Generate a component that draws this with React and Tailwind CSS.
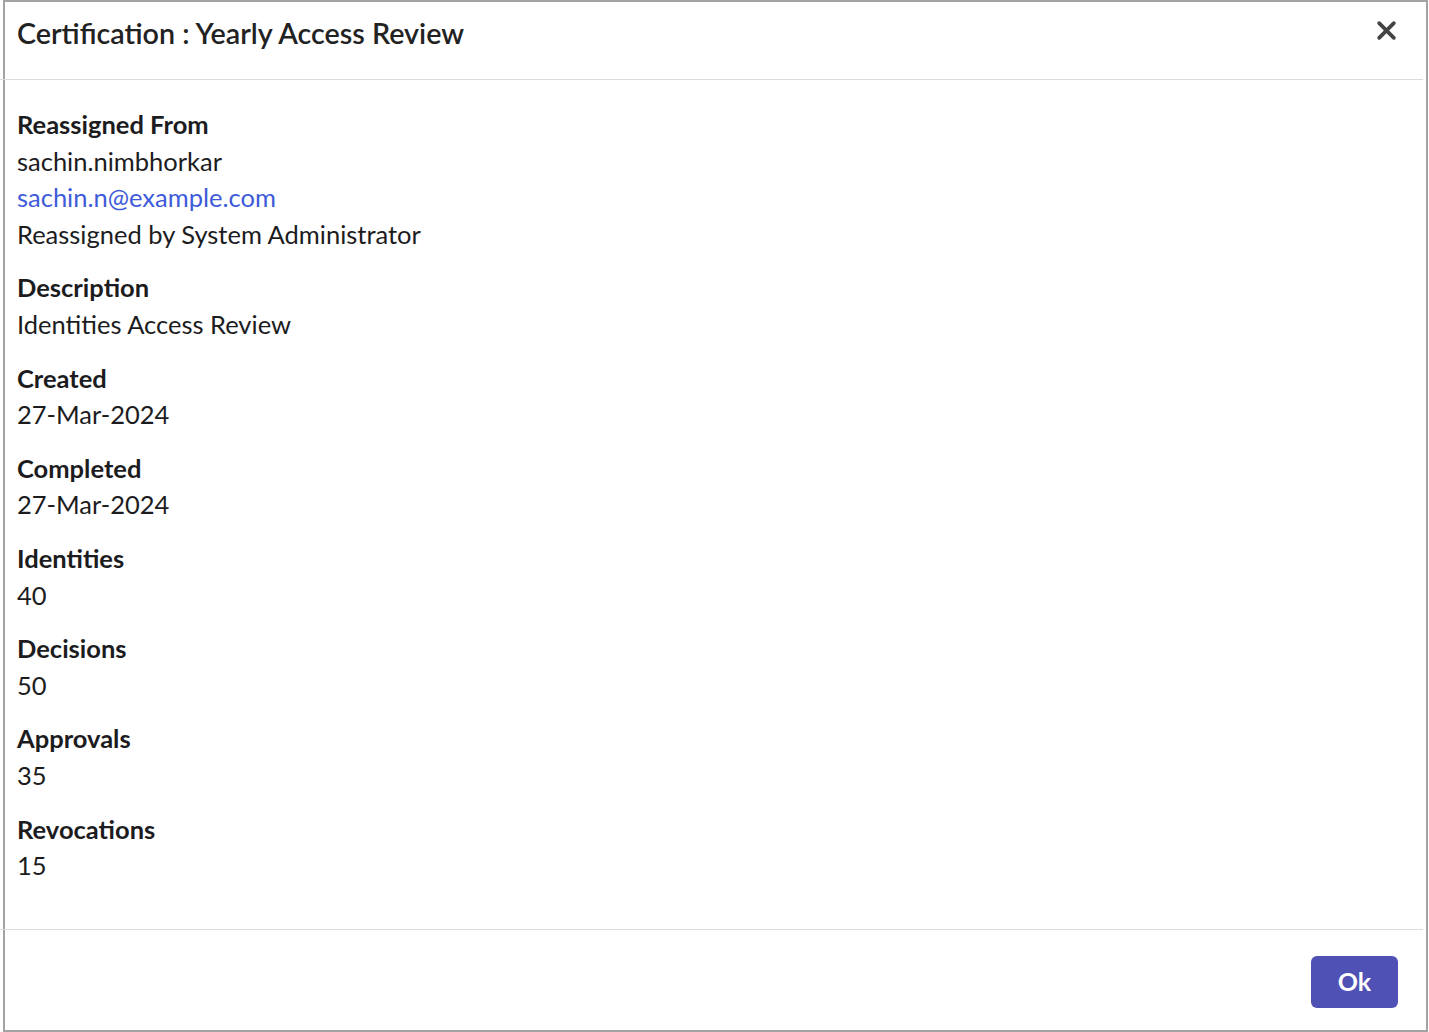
import React from "react";

const sections = [
  { label: "Reassigned From", values: [
    { t: "sachin.nimbhorkar" },
    { t: "sachin.n@example.com", link: true },
    { t: "Reassigned by System Administrator" },
  ] },
  { label: "Description", values: [{ t: "Identities Access Review" }] },
  { label: "Created", values: [{ t: "27-Mar-2024" }] },
  { label: "Completed", values: [{ t: "27-Mar-2024" }] },
  { label: "Identities", values: [{ t: "40" }] },
  { label: "Decisions", values: [{ t: "50" }] },
  { label: "Approvals", values: [{ t: "35" }] },
  { label: "Revocations", values: [{ t: "15" }] },
];

export default function App() {
  return (
    <div className="w-[1429px] h-[1032px] bg-white overflow-hidden" style={{ fontFamily: "Lato, 'Open Sans', sans-serif" }}>
      <div className="ml-[3px] w-[1425px] h-[1032px] border-2 border-[#a3a3a3] flex flex-col text-[#1c1c1e]">
        <div className="h-[77px] flex items-center justify-between pl-[12px] pr-[29px]">
          <h1 className="text-[28.7px] font-semibold leading-none -mt-[14px] text-[#222]">Certification : Yearly Access Review</h1>
          <svg width="21" height="21" viewBox="0 0 20 20" className="-mt-[20px]">
            <path d="M3 3 L17 17 M17 3 L3 17" stroke="#444" strokeWidth="3.6" strokeLinecap="round" />
          </svg>
        </div>
        <div className="h-px bg-[#dcdcdc] -ml-[5px] w-[1423px]" />
        <div className="flex-1 pl-[12px] pt-[26px] text-[25.5px] leading-[36.6px]">
          {sections.map((s, i) => (
            <div key={s.label} className={i === 0 ? "" : "mt-[17px]"}>
              <div className="font-bold">{s.label}</div>
              {s.values.map((v) => (
                <div key={v.t} className={v.link ? "text-[#3e5bd9]" : ""}>{v.t}</div>
              ))}
            </div>
          ))}
        </div>
        <div className="h-px bg-[#dcdcdc] -ml-[5px] w-[1423px]" />
        <div className="h-[100px] flex justify-end items-start pt-[26px] pr-[28px]">
          <button className="w-[87px] h-[52px] rounded-[6px] bg-[#4f51b4] text-white text-[25px] font-bold">Ok</button>
        </div>
      </div>
    </div>
  );
}
